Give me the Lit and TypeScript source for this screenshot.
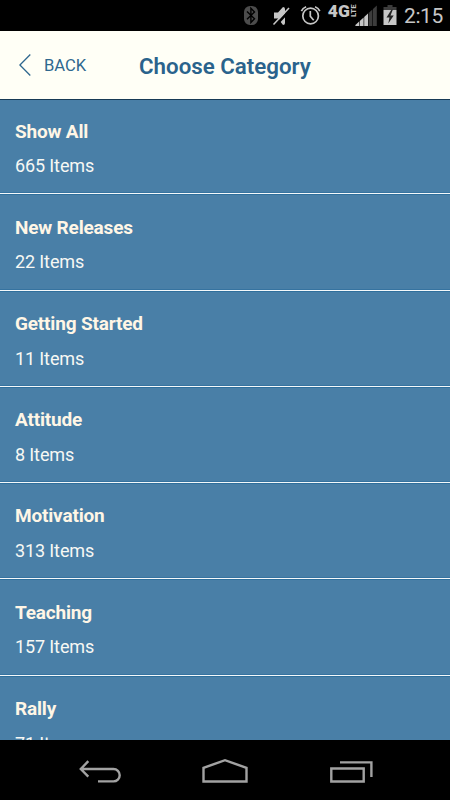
import { LitElement, html, css, svg } from "lit";
import { customElement, property } from "lit/decorators.js";

const CATEGORIES: { name: string; count: number }[] = [
  { name: "Show All", count: 665 },
  { name: "New Releases", count: 22 },
  { name: "Getting Started", count: 11 },
  { name: "Attitude", count: 8 },
  { name: "Motivation", count: 313 },
  { name: "Teaching", count: 157 },
  { name: "Rally", count: 71 },
];

const SIGNAL_BARS = [
  { x: 0, h: 1, on: true },
  { x: 4.4, h: 5, on: true },
  { x: 8.8, h: 9, on: true },
  { x: 13.2, h: 13, on: false },
  { x: 17.6, h: 17, on: false },
];

@customElement("status-bar")
export class StatusBar extends LitElement {
  static styles = css`
    :host {
      display: flex;
      height: 31px;
      flex: none;
      background: #000;
      color: #c6c6c6;
      justify-content: flex-end;
      padding-right: 7px;
    }
    svg {
      display: block;
      flex: none;
    }
    .time {
      font-size: 21px;
      line-height: 33px;
      width: 39px;
      margin-left: 7px;
      white-space: nowrap;
      letter-spacing: -0.4px;
    }
    .net {
      font: 900 17px/1 Roboto, sans-serif;
    }
    .lte {
      font: 700 8px/1 Roboto, sans-serif;
    }
  `;
  render() {
    return html`
      <svg width="154" height="31" viewBox="243 0 154 31" fill="none">
        <rect x="244" y="6" width="14" height="19" rx="6" fill="#4c4c4c" />
        <path d="M247 11.5l7.5 7.3-3.6 3.7V8.3l3.6 3.7-7.5 7.3" stroke="#000" stroke-width="1.4" />
        <path d="M274 12.5h4l5-5.5q2 0 2 2v14q0 2-2 2l-5-6.5h-4z" fill="#c6c6c6" />
        <path d="M274.5 26.5L291 9" stroke="#000" stroke-width="2.6" />
        <path d="M273.5 24.5L289 8" stroke="#c6c6c6" stroke-width="1.6" />
        <g stroke="#c6c6c6" stroke-width="1.7">
          <circle cx="310.6" cy="16" r="7.8" />
          <path d="M310.3 11v5.2l3.4 4M301.4 11.2q1.3-3 4.7-4.4M319.8 11.2q-1.3-3-4.7-4.4" />
        </g>
        <g fill="#c6c6c6">
          <text class="net" x="327.8" y="16.8" textLength="22" lengthAdjust="spacingAndGlyphs">4G</text>
          <text class="lte" transform="translate(356 17) rotate(-90)" textLength="12.5" lengthAdjust="spacingAndGlyphs">LTE</text>
        </g>
        ${SIGNAL_BARS.map(
          (b) => svg`<path d="M${355.4 + b.x} 26V${26 - b.h}L${359.2 + b.x} ${22.4 - b.h}V26z" fill=${b.on ? "#c6c6c6" : "#3c3c3c"} />`,
        )}
        <path d="M387.5 5h5v2h4v3h-13V7h4z" fill="#3c3c3c" />
        <path d="M383.5 10h13v15h-13z" fill="#c6c6c6" />
        <path d="M391.5 9.5l-5 8h3l-1.2 6 5.4-8h-3.2l2.4-6z" fill="#222" />
      </svg>
      <span class="time">2:15</span>
    `;
  }
}

@customElement("title-bar")
export class TitleBar extends LitElement {
  static styles = css`
    :host {
      display: grid;
      grid-template-columns: 139px 1fr;
      align-items: center;
      height: 69px;
      flex: none;
      box-sizing: border-box;
      background: #fffff6;
      border-bottom: 1px solid #173a55;
      color: #2a638c;
    }
    .back {
      display: flex;
      align-items: center;
      gap: 13px;
      padding-left: 19px;
      font-size: 16.6px;
      line-height: 24px;
      color: #2f688f;
    }
    .label {
      padding-top: 2px;
    }
    .title {
      font-size: 22.3px;
      line-height: 28px;
      font-weight: 600;
      margin: 2px 0 0;
      white-space: nowrap;
    }
  `;
  render() {
    return html`
      <div class="back">
        <svg width="12" height="22" viewBox="0 0 12 22" fill="none" stroke="currentColor" stroke-width="1.3">
          <path d="M11.3 .5L.9 11l10.4 10.5" />
        </svg>
        <span class="label">BACK</span>
      </div>
      <h1 class="title">Choose Category</h1>
    `;
  }
}

@customElement("category-row")
export class CategoryRow extends LitElement {
  @property() name = "";
  @property({ type: Number }) count = 0;
  static styles = css`
    :host {
      display: block;
      box-sizing: border-box;
      height: 96.25px;
      padding: 21.3px 15px 0;
    }
    :host(:first-child) {
      height: 94.4px;
      padding-top: 19.6px;
    }
    .name {
      font-size: 19px;
      line-height: 24px;
      font-weight: 700;
      letter-spacing: -0.18px;
      color: #fff6e6;
    }
    .count {
      font-size: 18px;
      line-height: 24px;
      margin-top: 10.6px;
      letter-spacing: -0.12px;
      color: #f7f8f4;
    }
  `;
  render() {
    return html`<div class="name">${this.name}</div>
      <div class="count">${this.count} Items</div>`;
  }
}

@customElement("nav-bar")
export class NavBar extends LitElement {
  static styles = css`
    :host {
      display: flex;
      flex: none;
      height: 60px;
      background: #000;
      justify-content: center;
      align-items: center;
      gap: 79px;
    }
    svg {
      display: block;
    }
  `;
  render() {
    return html`
      <svg width="46" height="26" viewBox="77 757 46 26" fill="none" stroke="#a2a2a2" stroke-width="2.4">
        <path d="M88.3 761.2L80.8 769l7.5 7.6M81 769h32.5a6.2 6.2 0 0 1 0 12.4H98" />
      </svg>
      <svg width="46" height="26" viewBox="202 757 46 26" fill="none" stroke="#a2a2a2" stroke-width="2.4">
        <path d="M203.5 781.5V767.8L225 760.2l21.5 7.6v13.7z" />
      </svg>
      <svg width="46" height="26" viewBox="327 757 46 26" fill="none" stroke="#a2a2a2" stroke-width="2.4">
        <path d="M331.3 768.5h32.4v13h-32.4zM340 762.4h31.4V777" />
      </svg>
    `;
  }
}

@customElement("app-root")
export class AppRoot extends LitElement {
  static styles = css`
    :host {
      display: flex;
      flex-direction: column;
      width: 450px;
      height: 800px;
      overflow: hidden;
      background: #000;
      font-family: Roboto, sans-serif;
    }
    .list {
      flex: 1;
      min-height: 0;
      overflow: hidden;
      background: #497fa7;
    }
    .row {
      border-bottom: 1px solid #f4f8fa;
      box-shadow: inset 0 -1px #3673a0, 0 1px #2f6f9c;
    }
  `;
  render() {
    return html`
      <status-bar></status-bar>
      <title-bar></title-bar>
      <div class="list">
        ${CATEGORIES.map((c) => html`<category-row class="row" .name=${c.name} .count=${c.count}></category-row>`)}
      </div>
      <nav-bar></nav-bar>
    `;
  }
}
